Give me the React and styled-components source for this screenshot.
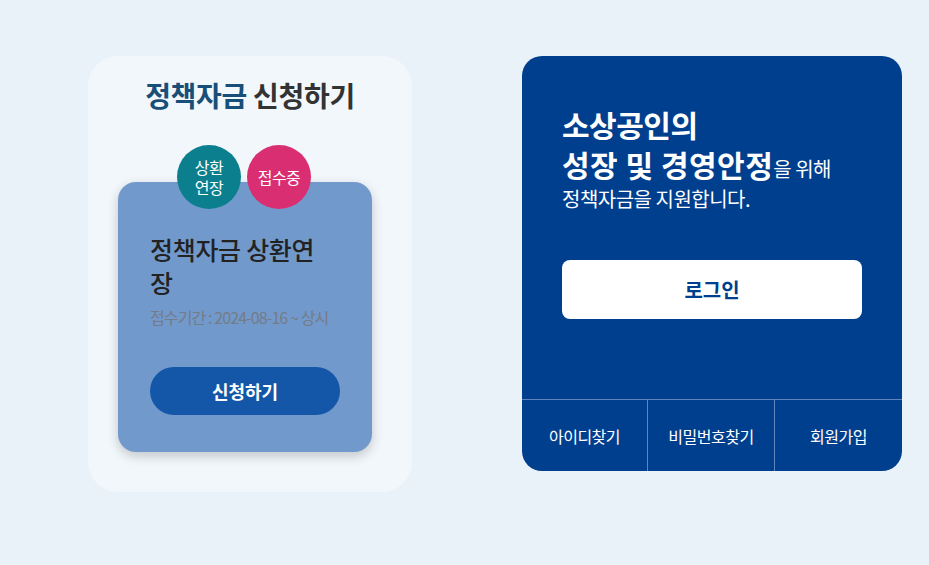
import styled, { createGlobalStyle } from 'styled-components';

const GlobalStyle = createGlobalStyle`
  body {
    margin: 0;
    background: #e9f1f9;
    font-family: 'Noto Sans CJK KR', 'Noto Sans', sans-serif;
  }
`;

const App = () => {
  return (
    <>
      <GlobalStyle />
      <Page>
        <ApplyPanel>
          <PanelTitle>
            <em>정책자금</em> 신청하기
          </PanelTitle>
          <CardWrap>
            <Badges>
              <Badge color="#0c7f8f">상환<br />연장</Badge>
              <Badge color="#d92f72">접수중</Badge>
            </Badges>
            <FundCard>
              <FundTitle>정책자금 상환연장</FundTitle>
              <FundPeriod>접수기간 : 2024-08-16 ~ 상시</FundPeriod>
              <ApplyButton>신청하기</ApplyButton>
            </FundCard>
          </CardWrap>
        </ApplyPanel>

        <LoginPanel>
          <LoginBody>
            <Headline>
              <strong>소상공인의</strong>
              <br />
              <strong className="wide">성장 및 경영안정</strong>을 위해
              <br />
              정책자금을 지원합니다.
            </Headline>
            <LoginButton>로그인</LoginButton>
          </LoginBody>
          <LinkRow>
            <LinkCell>아이디찾기</LinkCell>
            <LinkCell>비밀번호찾기</LinkCell>
            <LinkCell>회원가입</LinkCell>
          </LinkRow>
        </LoginPanel>
      </Page>
    </>
  );
};

const Page = styled.div`
  width: 929px;
  height: 565px;
  box-sizing: border-box;
  padding: 56px 0 0 88px;
  display: flex;
  align-items: flex-start;
  gap: 110px;
`;

const ApplyPanel = styled.section`
  width: 324px;
  height: 436px;
  box-sizing: border-box;
  background: #f2f7fb;
  border-radius: 30px;
  padding-top: 19px;
  display: flex;
  flex-direction: column;
  align-items: center;
`;

const PanelTitle = styled.h2`
  margin: 0;
  font-size: 28px;
  font-weight: 700;
  letter-spacing: -0.3px;
  line-height: 40px;
  color: #333333;

  em {
    font-style: normal;
    color: #184f78;
  }
`;

const CardWrap = styled.div`
  position: relative;
  align-self: flex-start;
  margin: 67px 0 0 30px;
`;

const Badges = styled.div`
  position: absolute;
  top: -37px;
  left: 59px;
  display: flex;
  gap: 6px;
  z-index: 1;
`;

const Badge = styled.div`
  width: 64px;
  height: 64px;
  border-radius: 50%;
  background: ${p => p.color};
  color: #ffffff;
  font-size: 16px;
  line-height: 20px;
  letter-spacing: -0.5px;
  display: flex;
  align-items: center;
  justify-content: center;
  text-align: center;
`;

const FundCard = styled.div`
  width: 254px;
  height: 270px;
  box-sizing: border-box;
  background: #7299cb;
  border-radius: 18px;
  box-shadow: 0 4px 12px rgba(0, 0, 0, 0.2);
  padding: 51px 32px 0;
  display: flex;
  flex-direction: column;
`;

const FundTitle = styled.h3`
  margin: 0;
  width: 176px;
  font-size: 25px;
  font-weight: 500;
  line-height: 33px;
  letter-spacing: -0.3px;
  color: #222222;
`;

const FundPeriod = styled.p`
  margin: 7px 0 0;
  font-size: 16px;
  line-height: 22px;
  letter-spacing: -0.9px;
  color: #737c89;
  white-space: nowrap;
`;

const ApplyButton = styled.button`
  margin-top: 39px;
  width: 190px;
  height: 48px;
  border: none;
  border-radius: 24px;
  background: #1457a9;
  color: #ffffff;
  font-family: inherit;
  font-size: 18px;
  font-weight: 700;
  cursor: pointer;
`;

const LoginPanel = styled.section`
  width: 380px;
  height: 415px;
  background: #003f8e;
  border-radius: 20px;
  display: flex;
  flex-direction: column;
  overflow: hidden;
`;

const LoginBody = styled.div`
  flex: 1;
  padding: 48px 40px 0;
`;

const Headline = styled.p`
  margin: 0;
  color: #ffffff;
  font-size: 20px;
  line-height: 30px;
  letter-spacing: -0.5px;

  strong {
    font-size: 30px;
    font-weight: 700;
    line-height: 40px;
  }

  strong.wide {
    letter-spacing: 0.5px;
  }
`;

const LoginButton = styled.button`
  margin-top: 46px;
  width: 300px;
  height: 59px;
  border: none;
  border-radius: 8px;
  background: #ffffff;
  color: #003f8e;
  font-family: inherit;
  font-size: 20px;
  font-weight: 700;
  cursor: pointer;
`;

const LinkRow = styled.nav`
  height: 71px;
  border-top: 1px solid #5f85bb;
  display: grid;
  grid-template-columns: 125px 127px 1fr;
`;

const LinkCell = styled.a`
  display: flex;
  align-items: center;
  justify-content: center;
  color: #ffffff;
  font-size: 16px;
  letter-spacing: -0.5px;
  cursor: pointer;

  & + & {
    border-left: 1px solid #5f85bb;
  }
`;

export default App;
